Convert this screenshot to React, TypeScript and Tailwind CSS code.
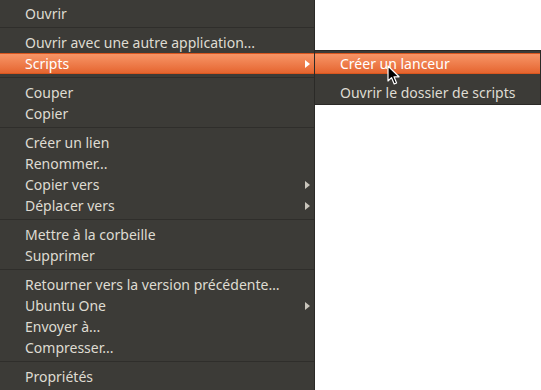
import React from "react";

type Item = { label: string; sub?: boolean; active?: boolean } | "sep";

const mainItems: Item[] = [
  { label: "Ouvrir" },
  "sep",
  { label: "Ouvrir avec une autre application..." },
  { label: "Scripts", sub: true, active: true },
  "sep",
  { label: "Couper" },
  { label: "Copier" },
  "sep",
  { label: "Créer un lien" },
  { label: "Renommer..." },
  { label: "Copier vers", sub: true },
  { label: "Déplacer vers", sub: true },
  "sep",
  { label: "Mettre à la corbeille" },
  { label: "Supprimer" },
  "sep",
  { label: "Retourner vers la version précédente…" },
  { label: "Ubuntu One", sub: true },
  { label: "Envoyer à..." },
  { label: "Compresser..." },
  "sep",
  { label: "Propriétés" },
];

function Arrow({ active }: { active?: boolean }) {
  return (
    <svg width="5" height="8" viewBox="0 0 5 8" className="shrink-0">
      <path d="M0 0 L5 4 L0 8 Z" fill={active ? "#ffffff" : "#c9c5bc"} />
    </svg>
  );
}

function Row({ item }: { item: Exclude<Item, "sep"> }) {
  return (
    <div
      className={`flex h-[21px] items-center pl-[25px] pr-[4px] ${
        item.active
          ? "border-y border-[#d9561f] bg-gradient-to-b from-[#f79566] to-[#e5652f] text-white"
          : "text-[#dfdbd2]"
      }`}
    >
      <span className="flex-1 whitespace-nowrap">{item.label}</span>
      {item.sub && <Arrow active={item.active} />}
    </div>
  );
}

function Separator({ visible = true }: { visible?: boolean }) {
  return (
    <div className="pt-[3px] pb-[4px]">
      <div className={`h-px ${visible ? "bg-[#2f2e2b]" : "bg-transparent"}`} />
    </div>
  );
}

function Cursor() {
  return (
    <svg
      width="14"
      height="21"
      viewBox="0 0 14 21"
      className="absolute left-[387px] top-[65px]"
    >
      <path
        d="M1 1 L1 16 L4.5 12.6 L7.2 19 L9.6 18 L7 11.8 L12 11.8 Z"
        fill="#000"
        stroke="#fff"
        strokeWidth="1.2"
        strokeLinejoin="round"
      />
    </svg>
  );
}

export default function App() {
  return (
    <div
      className="relative flex h-[390px] w-[541px] overflow-hidden bg-white text-[14px]"
      style={{ fontFamily: '"Noto Sans", "Open Sans", sans-serif' }}
    >
      {/* main context menu */}
      <div className="flex h-full w-[315px] shrink-0 flex-col border-r border-[#2b2a27] bg-[#3c3b37] pt-[3px]">
        {mainItems.map((it, i) =>
          it === "sep" ? <Separator key={i} /> : <Row key={i} item={it} />
        )}
      </div>

      {/* scripts submenu */}
      <div className="mt-[50px] flex h-[55px] flex-1 flex-col self-start border border-l-0 border-[#2b2a27] bg-[#3c3b37] pt-[2px]">
        <Row item={{ label: "Créer un lanceur", active: true }} />
        <Separator visible={false} />
        <Row item={{ label: "Ouvrir le dossier de scripts" }} />
      </div>

      <Cursor />
    </div>
  );
}
